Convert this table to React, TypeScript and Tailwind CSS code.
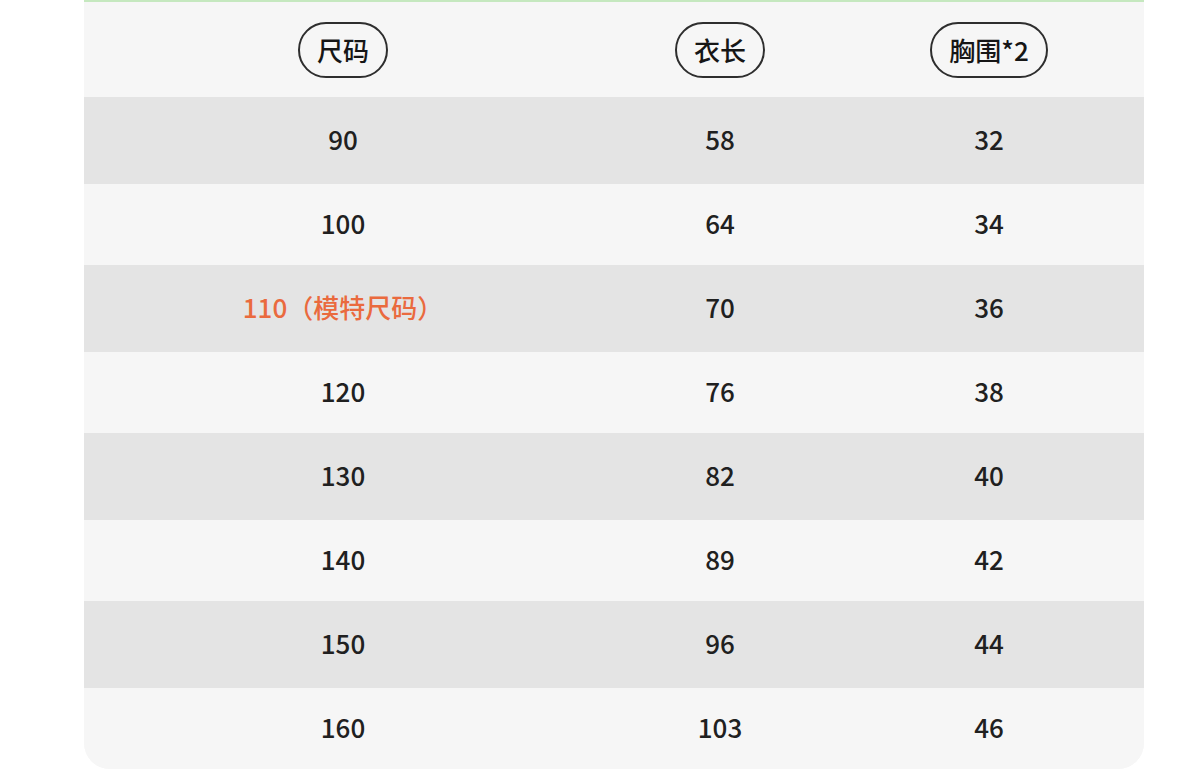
const rows = [
  { size: "90", length: "58", chest: "32" },
  { size: "100", length: "64", chest: "34" },
  { size: "110（模特尺码）", length: "70", chest: "36", model: true },
  { size: "120", length: "76", chest: "38" },
  { size: "130", length: "82", chest: "40" },
  { size: "140", length: "89", chest: "42" },
  { size: "150", length: "96", chest: "44" },
  { size: "160", length: "103", chest: "46" },
];

const cols = "grid grid-cols-[518px_236px_302px_4px]";

function Pill({ label }: { label: string }) {
  return (
    <span className="inline-flex h-[56px] items-center justify-center rounded-full border-2 border-[#2e2e2e] px-[17px] text-[26px] font-medium text-[#161616]">
      {label}
    </span>
  );
}

export default function App() {
  return (
    <div
      className="min-h-[784px] bg-white pl-[84px]"
      style={{ fontFamily: '"Noto Sans CJK SC", "Noto Sans", sans-serif' }}
    >
      <div className="w-[1060px] overflow-hidden rounded-b-[26px] bg-[#f6f6f6]">
        <div className="h-[2px] bg-[#c5e8bf]" />
        <div className={`${cols} h-[95px] items-center text-center`}>
          <div>
            <Pill label="尺码" />
          </div>
          <div>
            <Pill label="衣长" />
          </div>
          <div>
            <Pill label="胸围*2" />
          </div>
        </div>
        {rows.map((r, i) => (
          <div
            key={r.size}
            className={`${cols} items-center pb-[4px] text-center text-[26px] font-medium text-[#202020] ${
              i % 2 === 0 ? "h-[87px] bg-[#e4e4e4]" : "h-[81px] bg-[#f6f6f6]"
            }`}
          >
            <div className={r.model ? "text-[#ea6a3e]" : ""}>{r.size}</div>
            <div>{r.length}</div>
            <div>{r.chest}</div>
          </div>
        ))}
      </div>
    </div>
  );
}
